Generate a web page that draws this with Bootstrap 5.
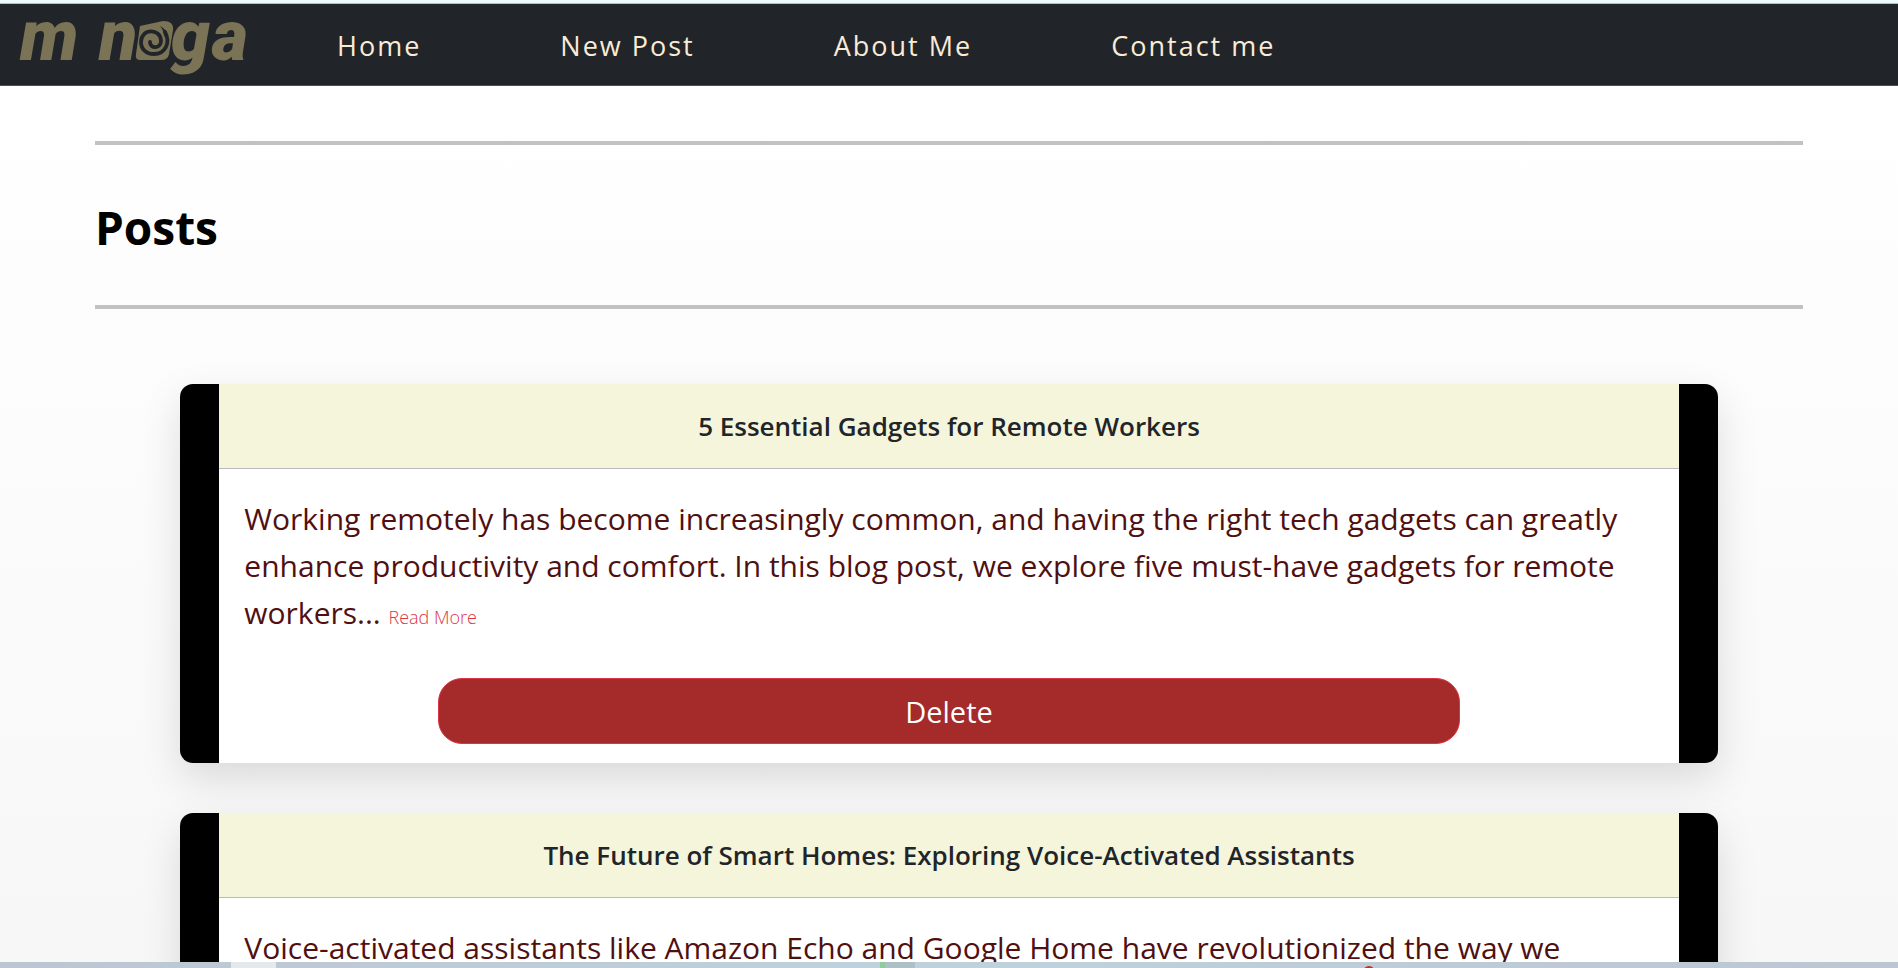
<!DOCTYPE html>
<html lang="en">
<head>
<meta charset="utf-8">
<meta name="viewport" content="width=device-width, initial-scale=1">
<title>Posts</title>
<link href="https://cdn.jsdelivr.net/npm/bootstrap@5.3.0/dist/css/bootstrap.min.css" rel="stylesheet">
<style>
  body { font-family: "Open Sans", "Noto Sans", sans-serif; background: #fff; }
  .top-edge { height: 4px; background: #ebfbfb; border-bottom: 1px solid #a9c4c4; }
  .site-nav { height: 82px; background: #212529; border-bottom: 1px solid #4c4a5c; }
  .site-nav .nav-link { font-size: 27px; letter-spacing: 2px; line-height: 42px; color: #faebd7; white-space: nowrap; }
  .nav-items { gap: 139px; margin-left: 91px; padding-top: 2px; }
  .logo { width: 230px; height: 60px; overflow: visible; }
  .logo text { font: italic 900 70px Roboto, sans-serif; fill: #7b7355; }
  .page { background: linear-gradient(#fff, #f7f7f7); scrollbar-width: none; }
  .wrap { width: 90%; padding-top: 55px; }
  .rule { height: 4px; margin: 0; border: 0; background: #c2c2c2; opacity: 1; }
  h1 { font-size: 46px; line-height: 60px; margin: 52px 0 48px; color: #000; }
  .posts { width: 90%; gap: 50px; margin-top: 75px; }
  .post { border: 0 solid #000; border-width: 0 39px; border-radius: 13px; box-shadow: 0 16px 40px rgba(0, 0, 0, .125); }
  .post-head { background: #f5f5dc; border-bottom: 1px solid #bbb; padding: 25px; }
  h2 { font-size: 26px; line-height: 34px; font-weight: 600; color: #212529; }
  .post-body { padding: 26px 0 19px; }
  .post-text { padding: 0 25px; font-size: 30px; line-height: 47px; color: #501010; }
  .more { font-size: 18px; line-height: 20px; color: #dc3545; }
  .btn-delete { width: 70%; height: 66px; margin-top: 42px; padding: 10px 12px 8px; font-size: 29px; line-height: 46px; color: #fff; background: #a52a2a; border: 1px solid #dc3545; border-radius: 24px; }
  .desk { height: 6px; background: linear-gradient(90deg, #bcc6d2, #bfd2dc 50%, #bcc6d2); }
  .desk svg { width: 100%; height: 6px; }
</style>
</head>
<body>
<div class="d-flex flex-column vh-100 overflow-hidden">
  <div class="top-edge flex-shrink-0"></div>
  <nav class="site-nav d-flex align-items-center flex-shrink-0 px-3" aria-label="Main">
    <a href="#" class="d-flex" aria-label="Home page">
      <svg class="logo" viewBox="16 15 230 60">
        <text x="20" y="60">m</text>
        <text x="99" y="60">n</text>
        <text x="171" y="60">g</text>
        <text x="212" y="60">a</text>
        <path fill="#7b7355" d="M140 26 L163 21 Q174 21 173 30 L169 54 Q168 60 161 60 L140 60 Q135 60 136 54 Z"/>
        <path fill="none" stroke="#212529" stroke-width="3.800" stroke-linecap="round" d="M165 32c6 11 0 22-11 22c-8 0-13-5-13-12c0-14 20-14 20-1c0 8-11 8-11 1"/>
        <path fill="#212529" d="M160 26q7 3 8 12l-4-2q0-5-4-10z"/>
      </svg>
    </a>
    <div class="nav-items d-flex">
      <a class="nav-link" href="#">Home</a>
      <a class="nav-link" href="#">New Post</a>
      <a class="nav-link" href="#">About Me</a>
      <a class="nav-link" href="#">Contact me</a>
    </div>
  </nav>
  <main class="page flex-grow-1 overflow-auto">
    <div class="wrap mx-auto">
      <hr class="rule">
      <h1 class="fw-bold">Posts</h1>
      <hr class="rule">
      <div class="posts d-flex flex-column mx-auto pb-5">
        <article class="post bg-white">
          <header class="post-head text-center"><h2 class="mb-0">5 Essential Gadgets for Remote Workers</h2></header>
          <div class="post-body">
            <p class="post-text mb-0">Working remotely has become increasingly common, and having the right tech gadgets can greatly enhance productivity and comfort. In this blog post, we explore five must-have gadgets for remote workers... <a class="more fw-light text-decoration-none" href="#">Read More</a></p>
            <button type="button" class="btn btn-delete d-block mx-auto">Delete</button>
          </div>
        </article>
        <article class="post bg-white">
          <header class="post-head text-center"><h2 class="mb-0">The Future of Smart Homes: Exploring Voice-Activated Assistants</h2></header>
          <div class="post-body">
            <p class="post-text mb-0">Voice-activated assistants like Amazon Echo and Google Home have revolutionized the way we</p>
          </div>
        </article>
      </div>
    </div>
  </main>
  <div class="desk d-flex flex-shrink-0" aria-hidden="true">
    <svg viewBox="0 0 1898 6" preserveAspectRatio="none">
      <path fill="#e4e9ed" d="M231 0h45v6h-45z"/>
      <path fill="#8fcb9b" d="M880 0h5v6h-5z"/>
      <path fill="#aebfc8" d="M885 0h30v6h-30z"/>
      <circle cx="1369" cy="10" r="6" fill="#c0302a"/>
    </svg>
  </div>
</div>
<script src="https://cdn.jsdelivr.net/npm/bootstrap@5.3.0/dist/js/bootstrap.bundle.min.js"></script>
</body>
</html>
